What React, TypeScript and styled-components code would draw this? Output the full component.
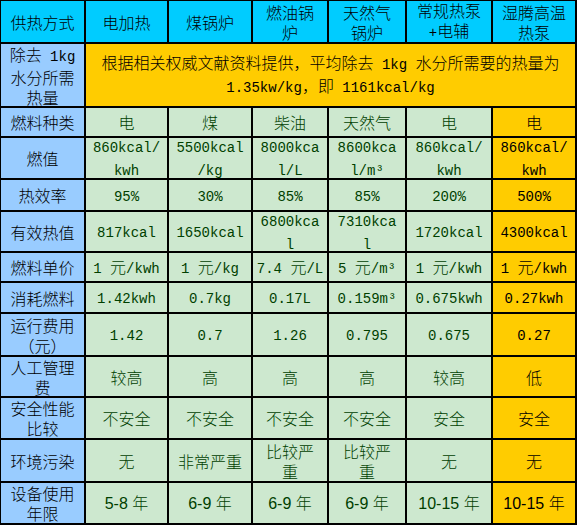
import React from "react";
import styled, { createGlobalStyle } from "styled-components";

type Tone = "head" | "label" | "data" | "hot";

const GlobalStyle = createGlobalStyle`
  html, body {
    margin: 0;
    padding: 0;
    background: #ffffff;
  }
`;

const COLS = [83, 81, 82, 74, 76, 84, 82];
const ROWS = [41, 62, 28, 40, 30, 39, 28, 29, 41, 39, 40, 41, 40];

const Sheet = styled.div`
  display: grid;
  grid-template-columns: ${COLS.map((c) => c + "px").join(" ")};
  grid-template-rows: ${ROWS.map((r) => r + "px").join(" ")};
  gap: 2px;
  padding: 1px 2px 2px 1px;
  width: max-content;
  background: #000000;
  font-family: "Noto Sans CJK SC", sans-serif;
  font-weight: 300;
  font-size: 16px;
  line-height: 20px;
`;

const bg: Record<Tone, string> = {
  head: "#00ccff",
  label: "#99ccff",
  data: "#cde8cf",
  hot: "#ffcc00",
};

const fg: Record<Tone, string> = {
  head: "#000000",
  label: "#000000",
  data: "#003f00",
  hot: "#000000",
};

const Cell = styled.div<{ $tone: Tone; $span?: number }>`
  display: flex;
  align-items: center;
  justify-content: center;
  overflow: hidden;
  background: ${(p) => bg[p.$tone]};
  color: ${(p) => fg[p.$tone]};
  grid-column: ${(p) => (p.$span ? `span ${p.$span}` : "auto")};
`;

const Text = styled.div`
  text-align: center;
  white-space: nowrap;
`;

// half-width runs (digits, units) sit in a mono face like the sheet's SimSun
const Latin = styled.span<{ $sans?: boolean }>`
  font-family: ${(p) =>
    p.$sans ? `"Liberation Sans", sans-serif` : `"Liberation Mono", monospace`};
  font-size: ${(p) => (p.$sans ? "16px" : "14px")};
  font-weight: 400;
`;

const runs = (s: string, sans?: boolean) =>
  s.split(/([\x20-\x7e³]+)/).map((part, i) =>
    i % 2 === 1 ? (
      <Latin key={i} $sans={sans}>
        {part}
      </Latin>
    ) : (
      part
    )
  );

const lines = (s: string, sans?: boolean) => (
  <Text>
    {s.split("|").map((part, i, arr) => (
      <React.Fragment key={i}>
        {runs(part, sans)}
        {i < arr.length - 1 && <br />}
      </React.Fragment>
    ))}
  </Text>
);

const header = [
  "供热方式",
  "电加热",
  "煤锅炉",
  "燃油锅|炉",
  "天然气|锅炉",
  "常规热泵|+电辅",
  "湿腾高温|热泵",
];

const rows: { label: string; values: string[]; sans?: boolean }[] = [
  { label: "燃料种类", values: ["电", "煤", "柴油", "天然气", "电", "电"] },
  {
    label: "燃值",
    values: [
      "860kcal/|kwh",
      "5500kcal|/kg",
      "8000kca|l/L",
      "8600kca|l/m³",
      "860kcal/|kwh",
      "860kcal/|kwh",
    ],
  },
  { label: "热效率", values: ["95%", "30%", "85%", "85%", "200%", "500%"] },
  {
    label: "有效热值",
    values: ["817kcal", "1650kcal", "6800kca|l", "7310kca|l", "1720kcal", "4300kcal"],
  },
  {
    label: "燃料单价",
    values: ["1 元/kwh", "1 元/kg", "7.4 元/L", "5 元/m³", "1 元/kwh", "1 元/kwh"],
  },
  {
    label: "消耗燃料",
    values: ["1.42kwh", "0.7kg", "0.17L", "0.159m³", "0.675kwh", "0.27kwh"],
  },
  { label: "运行费用|（元）", values: ["1.42", "0.7", "1.26", "0.795", "0.675", "0.27"] },
  { label: "人工管理|费", values: ["较高", "高", "高", "高", "较高", "低"] },
  {
    label: "安全性能|比较",
    values: ["不安全", "不安全", "不安全", "不安全", "安全", "安全"],
  },
  {
    label: "环境污染",
    values: ["无", "非常严重", "比较严|重", "比较严|重", "无", "无"],
  },
  {
    label: "设备使用|年限",
    values: ["5-8 年", "6-9 年", "6-9 年", "6-9 年", "10-15 年", "10-15 年"],
    sans: true,
  },
];

export default function App() {
  return (
    <>
      <GlobalStyle />
      <Sheet>
        {header.map((h, i) => (
          <Cell key={"h" + i} $tone="head">
            {lines(h)}
          </Cell>
        ))}

        <Cell $tone="label">{lines("除去 1kg|水分所需|热量")}</Cell>
        <Cell $tone="hot" $span={6}>
          {lines(
            "根据相关权威文献资料提供，平均除去 1kg 水分所需要的热量为|1.35kw/kg，即 1161kcal/kg"
          )}
        </Cell>

        {rows.map((r) => (
          <React.Fragment key={r.label}>
            <Cell $tone="label">{lines(r.label)}</Cell>
            {r.values.map((v, i) => (
              <Cell key={i} $tone={i === r.values.length - 1 ? "hot" : "data"}>
                {lines(v, r.sans)}
              </Cell>
            ))}
          </React.Fragment>
        ))}
      </Sheet>
    </>
  );
}
